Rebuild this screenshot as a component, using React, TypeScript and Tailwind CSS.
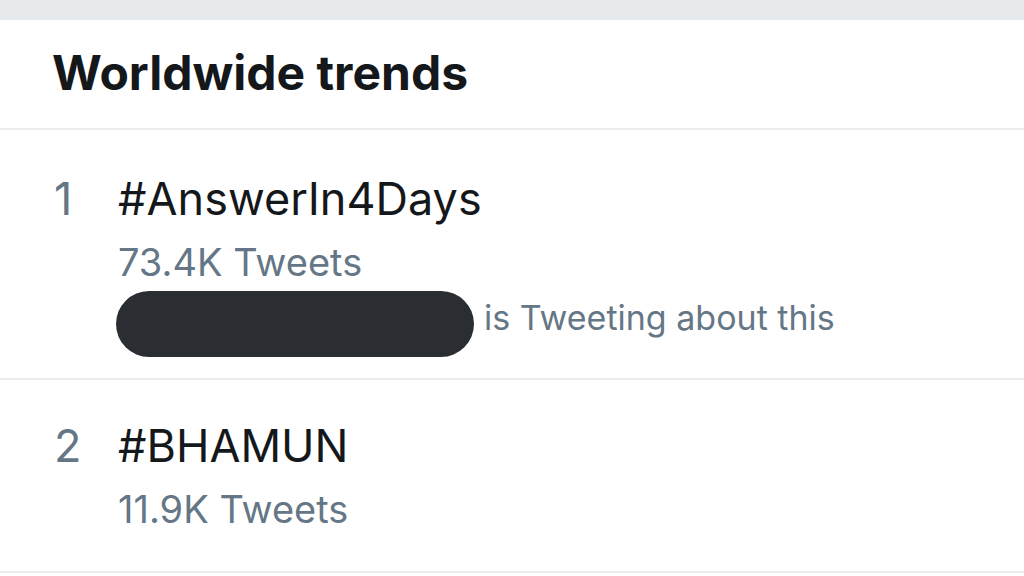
const trends = [
  {
    rank: 1,
    tag: '#AnswerIn4Days',
    count: '73.4K Tweets',
    context: 'is Tweeting about this'
  },
  {
    rank: 2,
    tag: '#BHAMUN',
    count: '11.9K Tweets'
  }
]

export default function App() {
  return (
    <div className="w-[1024px] h-[576px] overflow-hidden bg-white font-['Inter',sans-serif]">
      <div className="h-[20px] bg-[#e6e9ec]" />

      <div className="h-[110px] pl-[52px] pt-[25px] border-b-2 border-[#e9ecef]">
        <h1 className="text-[48px] leading-[56px] font-bold text-[#15181b]">
          Worldwide trends
        </h1>
      </div>

      {trends.map(trend => (
        <div
          key={trend.rank}
          className={
            trend.context
              ? 'flex items-start pl-[52px] pt-[44px] pb-[21px] border-b-2 border-[#e9ecef]'
              : 'flex items-start pl-[52px] pt-[41px] pb-[40px] border-b-2 border-[#e9ecef]'
          }
        >
          <span className="w-[66px] pl-[2px] text-[45px] leading-[50px] text-[#657786]">
            {trend.rank}
          </span>

          <div className="flex flex-col">
            <span className="text-[45px] leading-[50px] text-[#15181b]">
              {trend.tag}
            </span>
            <span className="mt-[16px] text-[38px] leading-[44px] text-[#657786]">
              {trend.count}
            </span>
            {trend.context && (
              <div className="mt-[7px] flex items-center gap-[10px] h-[66px] -ml-[2px]">
                <div className="w-[358px] h-[66px] rounded-full bg-[#2a2d31]" />
                <span className="text-[34px] leading-[40px] text-[#657786] -mt-[13px]">
                  {trend.context}
                </span>
              </div>
            )}
          </div>
        </div>
      ))}
    </div>
  )
}
